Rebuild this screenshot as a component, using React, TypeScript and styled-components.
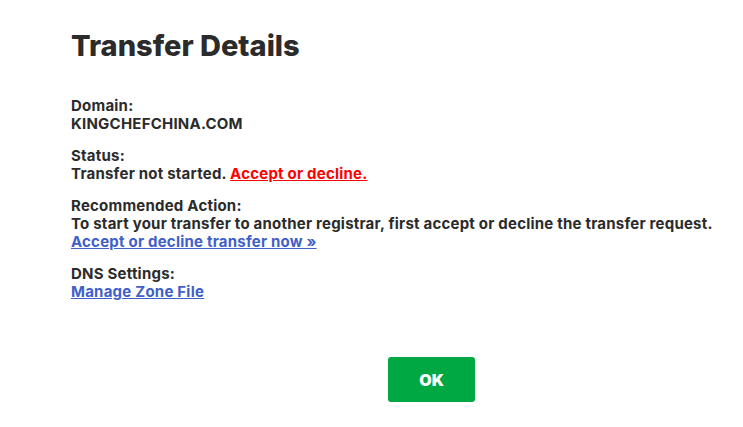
import styled, { createGlobalStyle } from "styled-components";

const GlobalStyle = createGlobalStyle`
  html, body {
    margin: 0;
    padding: 0;
    background: #fff;
  }
  body {
    font-family: Inter, Lato, "Liberation Sans", sans-serif;
    color: #2b2b2b;
  }
`;

const Dialog = styled.div`
  box-sizing: border-box;
  width: 743px;
  padding: 28px 0 0 71px;
`;

const Title = styled.h1`
  margin: 0 0 33px;
  font-size: 29px;
  line-height: 36px;
  font-weight: 800;
  letter-spacing: 0;
`;

const Field = styled.div`
  margin-bottom: 14px;
  font-size: 15px;
  line-height: 18px;
  font-weight: 700;
  letter-spacing: 0.22px;
`;

const Label = styled.div``;

const Value = styled.div``;

const Link = styled.a<{ $tone: "red" | "blue" }>`
  color: ${({ $tone }) => ($tone === "red" ? "#ff0000" : "#3f5fc9")};
  text-decoration: underline;
  cursor: pointer;
`;

const Footer = styled.div`
  display: flex;
  justify-content: center;
  padding-left: 49px;
  margin-top: 56px;
`;

const OkButton = styled.button`
  width: 87px;
  height: 45px;
  border: 0;
  border-radius: 3px;
  background: #00a843;
  color: #fff;
  font-family: inherit;
  font-size: 16px;
  font-weight: 900;
  cursor: pointer;
`;

export default function App() {
  return (
    <>
      <GlobalStyle />
      <Dialog>
        <Title>Transfer Details</Title>
        <Field>
          <Label>Domain:</Label>
          <Value>KINGCHEFCHINA.COM</Value>
        </Field>
        <Field>
          <Label>Status:</Label>
          <Value>
            Transfer not started. <Link $tone="red">Accept or decline.</Link>
          </Value>
        </Field>
        <Field>
          <Label>Recommended Action:</Label>
          <Value>
            To start your transfer to another registrar, first accept or decline the transfer request.
          </Value>
          <Value>
            <Link $tone="blue">Accept or decline transfer now »</Link>
          </Value>
        </Field>
        <Field>
          <Label>DNS Settings:</Label>
          <Value>
            <Link $tone="blue">Manage Zone File</Link>
          </Value>
        </Field>
        <Footer>
          <OkButton>OK</OkButton>
        </Footer>
      </Dialog>
    </>
  );
}
